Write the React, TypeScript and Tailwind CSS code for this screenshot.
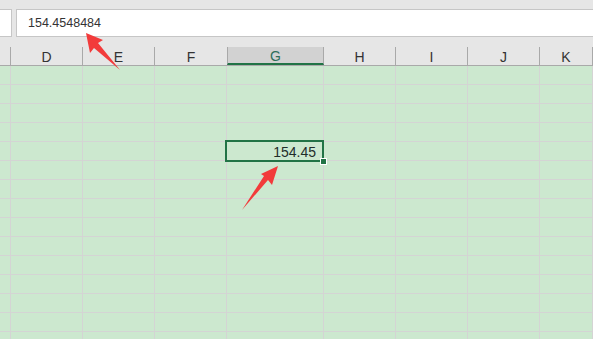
import React from "react";

const cols = [
  { key: "C", w: "w-[11px]", label: "" },
  { key: "D", w: "w-[72px]", label: "D" },
  { key: "E", w: "w-[72px]", label: "E" },
  { key: "F", w: "w-[72px]", label: "F" },
  { key: "G", w: "w-[97px]", label: "G" },
  { key: "H", w: "w-[72px]", label: "H" },
  { key: "I", w: "w-[72px]", label: "I" },
  { key: "J", w: "w-[72px]", label: "J" },
  { key: "K", w: "flex-1", label: "K" },
];

const rows = Array.from({ length: 15 }, (_, i) => i);

function Arrow({ points }: { points: string }) {
  return <polygon points={points} fill="#f23b3b" />;
}

export default function App() {
  return (
    <div
      className="relative w-[593px] h-[339px] overflow-hidden bg-[#cce8cf] select-none"
      style={{ fontFamily: '"Liberation Sans", Arial, sans-serif' }}
    >
      {/* formula bar */}
      <div className="h-[47px] bg-[#e6e6e6] pt-[9px] flex gap-[4px]">
        <div className="w-[12px] h-[28px] bg-white border border-l-0 border-[#c6c6c6]" />
        <div className="flex-1 h-[28px] bg-white border border-r-0 border-[#c6c6c6] flex items-center pl-[11px] text-[12.5px] text-[#333]">
          154.4548484
        </div>
      </div>

      {/* column headers */}
      <div className="flex h-[19px] bg-[#e6e6e6] border-b border-[#a9a9a9]">
        {cols.map((c) => (
          <div
            key={c.key}
            className={`${c.w} shrink-0 h-full flex items-center justify-center text-[14px] leading-none pt-[2px] ${
              c.key === "G"
                ? "bg-[#d2d2d2] text-[#2f6f5a] border-b-2 border-[#217346] -mb-[1px] border-x border-x-[#a9a9a9]"
                : "text-[#333] border-r border-[#a9a9a9]"
            } ${c.key === "F" ? "border-r-0" : ""}`}
          >
            {c.label}
          </div>
        ))}
      </div>

      {/* grid */}
      {rows.map((r) => (
        <div key={r} className="flex h-[19px]">
          {cols.map((c) => (
            <div
              key={c.key}
              className={`${c.w} shrink-0 h-full border-r border-b border-[#d4d4d4] relative`}
            >
              {r === 4 && c.key === "G" && (
                <>
                  <div className="absolute z-10 -top-[2px] -left-[2px] -right-[1px] -bottom-[2px] border-2 border-[#217346] flex items-center justify-end pr-[6px] text-[14px] text-[#1f2d2a] leading-none pt-[1px]">
                    154.45
                  </div>
                  <div className="absolute z-20 -right-[4px] -bottom-[5px] w-[7px] h-[7px] bg-[#217346] border border-white" />
                </>
              )}
            </div>
          ))}
        </div>
      ))}

      {/* annotation arrows */}
      <svg className="absolute inset-0 z-30 pointer-events-none" width="593" height="339">
        <Arrow points="86,33 103,40 98,43 120,70 94,48 90,53" />
        <Arrow points="278,166 272,185 268,180 242,210 264,176 261,174" />
      </svg>
    </div>
  );
}
